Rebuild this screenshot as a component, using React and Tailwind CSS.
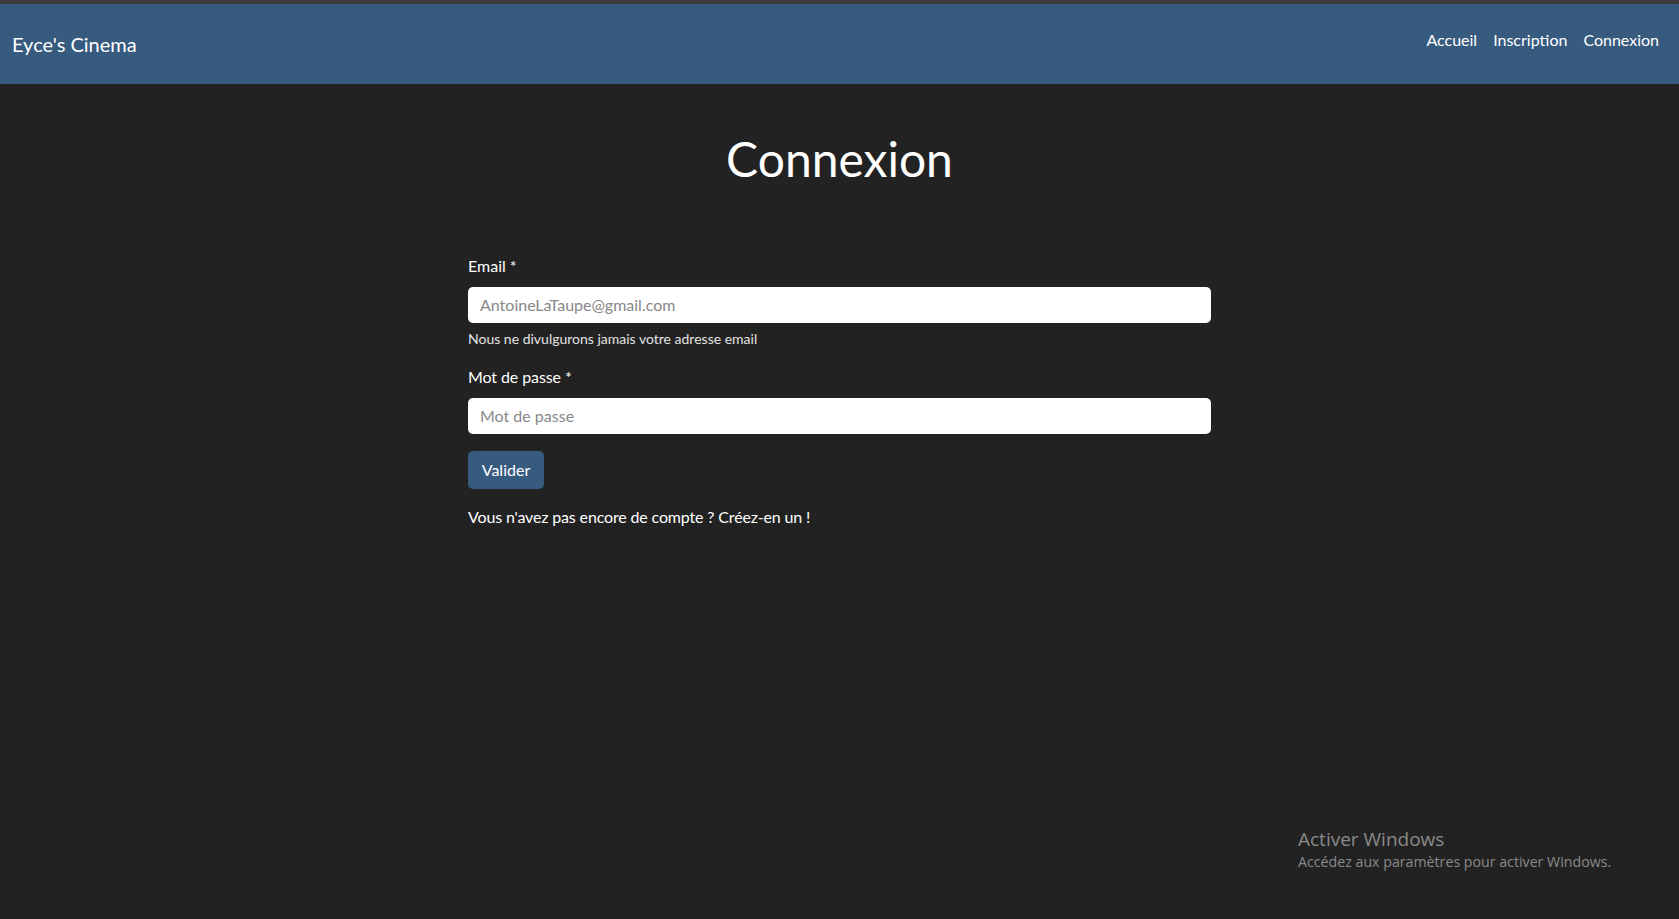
export default function App() {
  return (
    <div className="relative min-h-screen bg-[#222222] text-white" style={{ fontFamily: "Lato, 'Noto Sans', sans-serif" }}>
      <div className="h-[4px] bg-[#3b3b3b]" />
      <nav className="flex h-[80px] items-center justify-between bg-[#375a7f] px-[12px]">
        <a className="text-[20px] leading-[30px] text-white">Eyce's Cinema</a>
        <ul className="flex pb-[8px] text-[16px] leading-[24px]">
          <li><a className="px-[8px] text-white">Accueil</a></li>
          <li><a className="px-[8px] text-white">Inscription</a></li>
          <li><a className="px-[8px] text-white">Connexion</a></li>
        </ul>
      </nav>
      <main className="mx-auto w-[743px] pt-[46px]">
        <h1 className="text-center text-[48px] leading-[1.2] font-normal">Connexion</h1>
        <form className="mt-[66px]">
          <div className="mb-[16px]">
            <label className="mb-[9px] block text-[16px] leading-[24px]">Email *</label>
            <input
              type="email"
              placeholder="AntoineLaTaupe@gmail.com"
              className="block h-[36px] w-full rounded-[5px] bg-white px-[12px] text-[16px] text-[#222] placeholder:text-[#888] outline-none"
              style={{ fontFamily: "Lato, 'Noto Sans', sans-serif" }}
            />
            <div className="mt-[5px] text-[14px] leading-[21px] text-[#e2e2e2]">Nous ne divulgurons jamais votre adresse email</div>
          </div>
          <div className="mb-[17px]">
            <label className="mb-[9px] block text-[16px] leading-[24px] tracking-[-0.1px]">Mot de passe *</label>
            <input
              type="password"
              placeholder="Mot de passe"
              className="block h-[36px] w-full rounded-[5px] bg-white px-[12px] text-[16px] text-[#222] placeholder:text-[#888] outline-none"
              style={{ fontFamily: "Lato, 'Noto Sans', sans-serif" }}
            />
          </div>
          <button type="button" className="h-[38px] w-[76px] rounded-[5px] bg-[#375a7f] text-[16px] leading-[24px] text-white" style={{ fontFamily: "Lato, 'Noto Sans', sans-serif" }}>
            Valider
          </button>
          <p className="mt-[16px] text-[16px] leading-[24px] tracking-[-0.15px]">
            Vous n'avez pas encore de compte ? <a className="text-white">Créez-en un !</a>
          </p>
        </form>
      </main>
      <div className="pointer-events-none absolute left-[1298px] top-[827px] text-[#8a8a8a]" style={{ fontFamily: "'Open Sans', 'Noto Sans', sans-serif" }}>
        <div className="text-[19px] leading-[24px]">Activer Windows</div>
        <div className="text-[14.2px] leading-[21px]">Accédez aux paramètres pour activer Windows.</div>
      </div>
    </div>
  );
}
